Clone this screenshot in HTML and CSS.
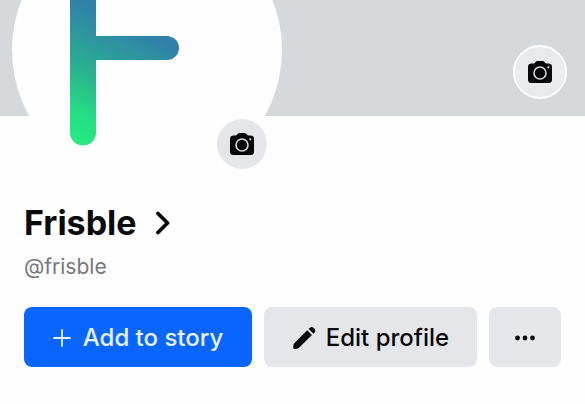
FILE: index.html
```
<!DOCTYPE html>
<html lang="en">
<head>
<meta charset="utf-8">
<meta name="viewport" content="width=device-width, initial-scale=1">
<title>Frisble</title>
<link rel="stylesheet" href="styles.css">
</head>
<body>
<svg class="defs" aria-hidden="true">
  <symbol id="camera" viewBox="0 0 26 24">
    <path fill="#050709" d="M4.500 3.500H6.500Q7.500 3.500 8 2.700L8.500 1.900Q9.200 1 10.300 1H15.700Q16.800 1 17.500 1.900L18 2.700Q18.500 3.500 19.500 3.500H21.500Q25 3.500 25 7V19.500Q25 23 21.500 23H4.500Q1 23 1 19.500V7Q1 3.500 4.500 3.500Z"/>
    <circle cx="13" cy="13" r="6" fill="none" stroke="#d5d8da" stroke-width="1.600"/>
    <circle cx="21.300" cy="7.300" r="1.100" fill="#d5d8da"/>
  </symbol>
</svg>
<main class="profile">
  <header class="cover">
    <div class="avatar">
      <svg class="logo" viewBox="0 0 270 270" role="img" aria-label="Frisble logo">
        <defs>
          <linearGradient id="mark" gradientUnits="userSpaceOnUse" x1="71" y1="230" x2="128" y2="113">
            <stop offset="0" stop-color="#24e981"/>
            <stop offset=".2" stop-color="#25df86"/>
            <stop offset=".44" stop-color="#29bc8c"/>
            <stop offset=".62" stop-color="#2ba596"/>
            <stop offset="1" stop-color="#317fab"/>
          </linearGradient>
        </defs>
        <path fill="url(#mark)" d="M58 53A13 13 0 0 1 71 40H178A12 12 0 0 1 178 64H84V121H155A12 12 0 0 1 155 145H84V217.500A13 13 0 0 1 58 217.500Z"/>
      </svg>
      <button class="photo-button photo-button-avatar" type="button" aria-label="Change profile photo"><svg class="camera"><use href="#camera"/></svg></button>
    </div>
    <button class="photo-button photo-button-cover" type="button" aria-label="Change cover photo"><svg class="camera"><use href="#camera"/></svg></button>
  </header>
  <section class="details">
    <h1 class="name"><a href="#profiles">Frisble
      <svg class="chevron" viewBox="0 0 16 24" aria-hidden="true"><path d="M3 2.500L12.500 12L3 21.500" fill="none" stroke="#080a0c" stroke-width="3.800" stroke-linecap="round" stroke-linejoin="round"/></svg></a></h1>
    <p class="handle">@frisble</p>
    <div class="actions">
      <button class="action action-primary" type="button">
        <svg class="plus" viewBox="0 0 18 18" aria-hidden="true"><path d="M9 1V17M1 9H17" stroke="#e8f3ff" stroke-width="1.800" stroke-linecap="round"/></svg>
        Add to story
      </button>
      <button class="action" type="button">
        <svg class="pencil" viewBox="0 0 24 24" aria-hidden="true"><path fill="#080a0c" d="M15.200 4.300L20 9.100L7.300 21.600Q6.300 22.600 4.900 22.700L2.600 23Q1 23.100 1.200 21.500L1.400 19.300Q1.500 18 2.500 17ZM16.600 2.900L17.900 1.700Q19.700 .2 21.400 1.700L22.500 2.800Q24.100 4.600 22.600 6.400L21.400 7.700Z"/></svg>
        Edit profile
      </button>
      <button class="action" type="button" aria-label="More options">
        <svg class="dots" viewBox="0 0 20 6" aria-hidden="true"><g fill="#080a0c"><circle cx="2.500" cy="3" r="2.400"/><circle cx="10" cy="3" r="2.400"/><circle cx="17.500" cy="3" r="2.400"/></g></svg>
      </button>
    </div>
  </section>
</main>
</body>
</html>
```
FILE: styles.css
```
* {
  box-sizing: border-box;
}

body {
  margin: 0;
  background: #fefefe;
  color: #080a0c;
  font-family: Inter, "Liberation Sans", sans-serif;
  overflow: hidden;
}

.defs {
  position: absolute;
  width: 0;
  height: 0;
}

.cover {
  position: relative;
  height: 116px;
  background: #d6d9dc;
}

/* The avatar hangs over the lower edge of the cover. */
.avatar {
  position: absolute;
  left: 12px;
  bottom: -69px;
  width: 270px;
  height: 270px;
  border-radius: 50%;
  background: #fefefe;
}

.logo {
  display: block;
  width: 100%;
  height: 100%;
}

.photo-button {
  position: absolute;
  display: grid;
  place-items: center;
  width: 50px;
  height: 50px;
  padding: 0;
  border: 0;
  border-radius: 50%;
  background: #e4e6e9;
}

.photo-button-avatar {
  right: 15px;
  bottom: 16px;
}

.photo-button-cover {
  right: 18px;
  bottom: 17px;
  width: 54px;
  height: 54px;
  border: 2px solid #fefefe;
  background: #e8eaec;
}

.camera {
  width: 26px;
  height: 24px;
}

.details {
  padding: 87px 24px 36px;
}

.name {
  margin: 0;
  font-size: 34px;
  line-height: 40px;
  font-weight: 700;
}

.name a {
  display: inline-flex;
  align-items: center;
  gap: 18px;
  color: inherit;
  text-decoration: none;
}

.chevron {
  width: 16px;
  height: 24px;
}

.handle {
  margin: 11px 0 27px;
  color: #75787c;
  font-size: 21px;
  line-height: 26px;
}

.actions {
  display: grid;
  grid-template-columns: 228fr 213fr 72fr;
  gap: 12px;
}

.action {
  display: flex;
  align-items: center;
  justify-content: center;
  gap: 10px;
  height: 60px;
  padding: 2px 0 0;
  border: 0;
  border-radius: 8px;
  background: #e4e6e9;
  color: #080a0c;
  font: 500 24px/28px Inter, "Liberation Sans", sans-serif;
  white-space: nowrap;
}

.action-primary {
  gap: 12px;
  background: #0866ff;
  color: #e8f3ff;
}

.plus {
  width: 18px;
  height: 18px;
}

.pencil {
  width: 24px;
  height: 24px;
}

.dots {
  width: 20px;
  height: 6px;
}
```
